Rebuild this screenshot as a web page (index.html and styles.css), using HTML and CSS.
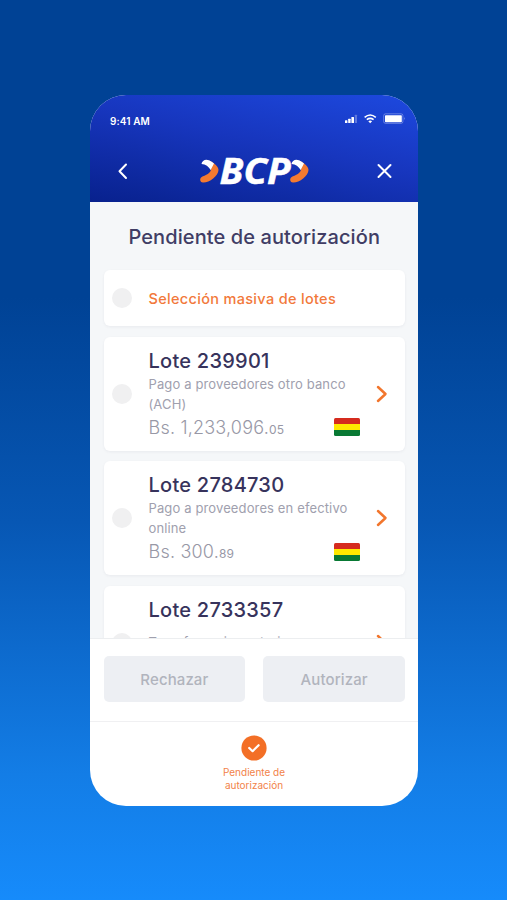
FILE: index.html
```html
<!DOCTYPE html>
<html lang="es">
<head>
<meta charset="utf-8">
<title>BCP - Pendiente de autorización</title>
<link rel="stylesheet" href="styles.css">
</head>
<body>
<main class="phone">
  <header class="header">
    <div class="status">
      <span class="time">9:41 AM</span>
      <svg class="signals" width="62" height="14" viewBox="0 0 62 14" fill="#fff">
        <rect x="1" y="8.2" width="2.4" height="2.8" rx=".5"/><rect x="4.2" y="6.8" width="2.4" height="4.2" rx=".5"/><rect x="7.4" y="5" width="2.6" height="6" rx=".5"/><rect x="10.8" y="2.8" width="2.2" height="8.2" rx=".5" opacity=".3"/>
        <g fill="none" stroke="#fff" stroke-width="1.6"><path d="M20.6 5.3q5.600-4.600 11.200 0"/><path d="M22.800 7.700q3.400-2.600 6.800 0"/></g><path d="M24.300 9.200q1.900-1.300 3.800 0l-1.900 2z"/>
        <rect x="39.700" y="1.800" width="19.200" height="9.600" rx="1.800" fill="none" stroke="#fff" stroke-width=".7" opacity=".45"/><rect x="41" y="3.200" width="16.800" height="7" rx=".7"/><path d="M60 5v3q1.400-1.500 0-3z" opacity=".5"/>
      </svg>
    </div>
    <div class="nav">
      <svg width="14" height="20" viewBox="0 0 14 20"><path d="M10 3.500 3.500 10.200 10 17" fill="none" stroke="#fff" stroke-width="2" stroke-linecap="round" stroke-linejoin="round"/></svg>
      <svg class="logo" width="114" height="40" viewBox="0 0 114 40">
        <g id="mark"><path d="M13 9.500C18.500 12 22.600 16 22.500 19c-.2 6-9.500 13-15.500 12.600-3.500-.3-3.800-4.600-.6-6C12.500 23 15 21.500 15.200 17z" fill="#f47a30"/><path d="M5.500 13C6 9.500 9.500 7.600 13 9.300c2 .9 3.500 1.900 5 3.100L14.700 19c-2-3.500-5-5.700-9.200-6z" fill="#fff"/></g>
        <text x="23.500" y="32.500" textLength="71" lengthAdjust="spacingAndGlyphs">BCP</text>
        <use href="#mark" x="90"/>
      </svg>
      <svg width="18" height="18" viewBox="0 0 18 18"><path d="m2.500 3 12 12M14.500 3l-12 12" stroke="#fff" stroke-width="2" stroke-linecap="round"/></svg>
    </div>
  </header>
  <section class="content">
    <h1>Pendiente de autorización</h1>
    <div class="card mass"><i class="check"></i><strong>Selección masiva de lotes</strong></div>
    <article class="card lot">
      <i class="check"></i>
      <div class="info"><h2>Lote 239901</h2><p>Pago a proveedores otro banco (ACH)</p>
        <div class="amount"><span>Bs. 1,233,096.<small>05</small></span><i class="flag"></i></div></div>
      <svg class="go" width="14" height="20" viewBox="0 0 14 20"><path d="m3 3 7.500 7L3 17"/></svg>
    </article>
    <article class="card lot">
      <i class="check"></i>
      <div class="info"><h2>Lote 2784730</h2><p>Pago a proveedores en efectivo online</p>
        <div class="amount"><span>Bs. 300.<small>89</small></span><i class="flag"></i></div></div>
      <svg class="go" width="14" height="20" viewBox="0 0 14 20"><path d="m3 3 7.500 7L3 17"/></svg>
    </article>
    <article class="card lot">
      <i class="check"></i>
      <div class="info"><h2>Lote 2733357</h2><p class="single">Transferencias exterior</p></div>
      <svg class="go" width="14" height="20" viewBox="0 0 14 20"><path d="m3 3 7.500 7L3 17"/></svg>
    </article>
  </section>
  <div class="actions"><button>Rechazar</button><button>Autorizar</button></div>
  <footer class="tab">
    <svg width="26" height="26" viewBox="0 0 26 26"><circle cx="13" cy="13" r="12.600" fill="#f36f26"/><path d="m8.200 13 3.400 3.200 6-6" fill="none" stroke="#fff" stroke-width="2.200" stroke-linecap="round" stroke-linejoin="round"/></svg>
    <span>Pendiente de<br>autorización</span>
  </footer>
</main>
</body>
</html>
```
FILE: styles.css
```css
* { box-sizing: border-box; margin: 0; }
body { height: 900px; padding: 95px 89px 0 90px; overflow: hidden; font-family: Inter, "Liberation Sans", sans-serif; background: linear-gradient(#004295 0, #004295 33%, #0757b4 58%, #137de6 86%, #168bfb 100%); }
.phone { height: 711px; border-radius: 36px; overflow: hidden; background: #fff; display: flex; flex-direction: column; }
.header { height: 107px; flex: none; background: linear-gradient(192deg, #1d49df 0, #1736be 45%, #08218d 100%); }
.status { height: 50px; padding: 17px 12px 0 20px; display: flex; justify-content: space-between; align-items: flex-start; color: #fff; }
.time { font-size: 10px; line-height: 19px; font-weight: 600; letter-spacing: .1px; white-space: nowrap; }
.nav { height: 52px; padding: 0 24px 0 26px; display: flex; align-items: center; justify-content: space-between; }
.logo { overflow: visible; }
.logo text { font: italic 700 36px "Open Sans", sans-serif; fill: #fff; stroke: #fff; stroke-width: .5px; }
.content { height: 437px; flex: none; overflow: hidden; padding: 0 13px 0 13.500px; background: #f5f7f9; border-bottom: 1px solid #eceef0; }
h1 { font-size: 20px; font-weight: 500; line-height: 24px; letter-spacing: .1px; padding: 23px 0 21px; text-align: center; color: #403d65; white-space: nowrap; }
.card { background: #fff; border-radius: 6px; box-shadow: 0 1px 3px rgba(30, 40, 60, .06); display: flex; align-items: center; padding: 0 16px 0 8px; margin-bottom: 10.500px; }
.check { width: 20px; height: 20px; flex: none; border-radius: 50%; background: #f0f0f1; margin-right: 17px; }
.mass { height: 56px; }
.mass strong { font-size: 14.500px; font-weight: 500; letter-spacing: .32px; color: #f2793b; white-space: nowrap; }
.lot { height: 114px; }
.info { flex: 1; align-self: stretch; padding-top: 11px; }
h2 { font-size: 20px; line-height: 26px; font-weight: 500; letter-spacing: .25px; color: #37335c; white-space: nowrap; }
.info p { font-size: 13px; line-height: 20px; letter-spacing: .13px; color: #a0a0ae; width: 206px; }
.info .single { margin-top: 9px; }
.amount { display: flex; width: 211.500px; justify-content: space-between; align-items: center; line-height: 26px; font-size: 18px; font-weight: 300; letter-spacing: .2px; color: #9898a6; }
.amount span { padding-top: 1px; }
.amount small { font-size: 12px; font-weight: 400; }
.flag { width: 26px; height: 18px; margin-top: -2px; border-radius: 1.500px; background: linear-gradient(#d52b1e 0 33%, #ffe900 33% 66%, #087934 66%); }
.go { fill: none; stroke: #f2762d; stroke-width: 2.500px; stroke-linecap: round; stroke-linejoin: round; }
.actions { height: 83px; flex: none; padding: 17px 13px 0 13.500px; display: flex; gap: 18px; border-bottom: 1px solid #f0f0f2; }
button { flex: 1; height: 46px; border: 0; border-radius: 5px; background: #edeff3; color: #b1b4bd; font: 500 15px Inter, sans-serif; letter-spacing: .1px; }
.tab { flex: 1; padding-top: 13px; display: flex; flex-direction: column; align-items: center; color: #f28249; font-size: 10px; line-height: 13.500px; text-align: center; }
.tab span { margin-top: 4.500px; }
```
